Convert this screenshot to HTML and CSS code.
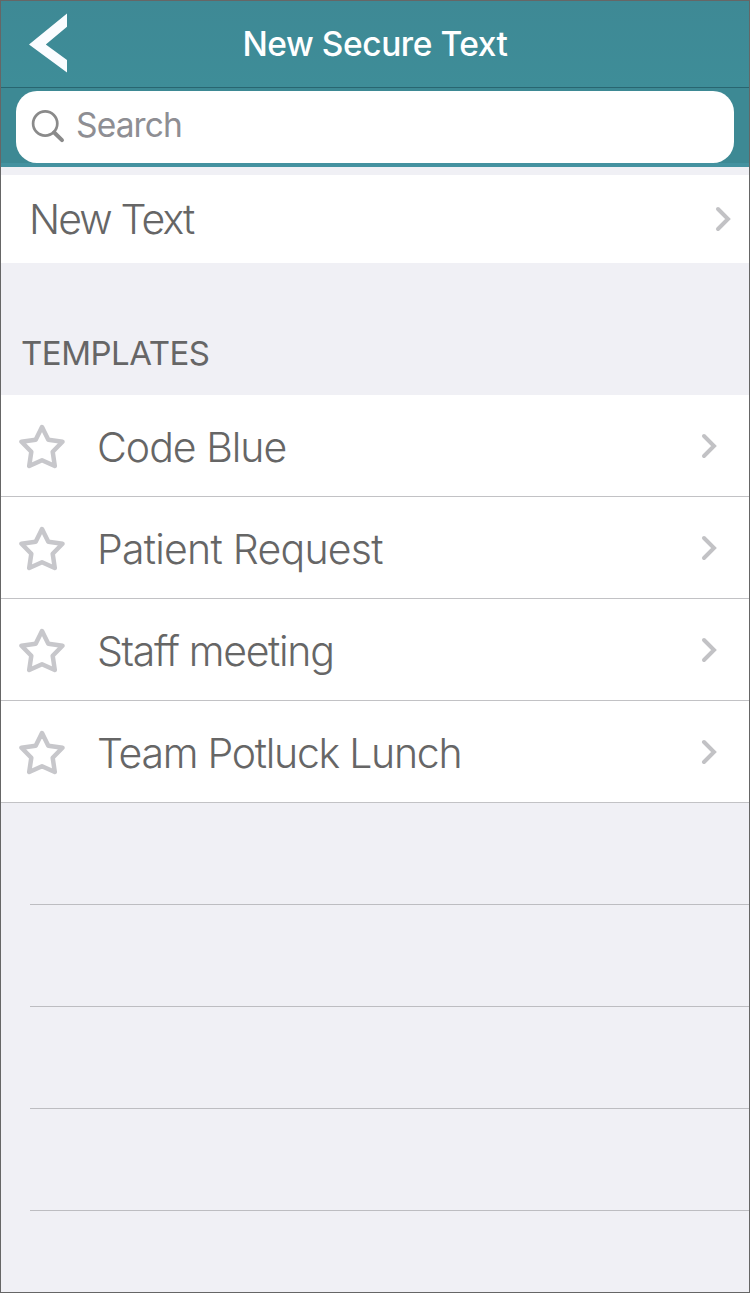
FILE: index.html
```html
<!DOCTYPE html>
<html lang="en">
<head>
    <meta charset="UTF-8">
    <meta name="viewport" content="width=device-width, initial-scale=1.0">
    <title>New Secure Text</title>
    <link rel="stylesheet" href="styles.css">
</head>
<body>
    <div class="screen">
        <!-- Top bar -->
        <header class="navbar">
            <svg class="back" viewBox="0 0 38 58"><path d="M38 -0.500V12.800L16.800 30.500L38 46V58.500L0 30.500Z" fill="#fafcff"/></svg>
            <h1>New Secure Text</h1>
        </header>

        <!-- Search -->
        <div class="search-bar">
            <div class="search-box">
                <svg class="search-icon" viewBox="0 0 34 34"><circle cx="14.200" cy="13.500" r="12.100" /><path class="handle" d="M23.200 22.500L31 30.200"/></svg>
                <span>Search</span>
            </div>
        </div>

        <div class="new-text">
            <span class="label new">New Text</span>
            <svg class="chevron" viewBox="0 0 16 26"><path d="M3 3L13 13L3 23"/></svg>
        </div>

        <!-- Templates -->
        <h2>TEMPLATES</h2>
        <ul class="templates">
            <li>
                <svg class="star" viewBox="0 0 46 46"><path d="M23 4L29.300 16.800L43.500 18.700L33.700 28.800L35.800 43L23 37.200L10.200 43L12.300 28.800L2.500 18.700L16.700 16.800Z"/></svg>
                <span class="label code">Code Blue</span>
                <svg class="chevron" viewBox="0 0 16 26"><path d="M3 3L13 13L3 23"/></svg>
            </li>
            <li>
                <svg class="star" viewBox="0 0 46 46"><path d="M23 4L29.300 16.800L43.500 18.700L33.700 28.800L35.800 43L23 37.200L10.200 43L12.300 28.800L2.500 18.700L16.700 16.800Z"/></svg>
                <span class="label patient">Patient Request</span>
                <svg class="chevron" viewBox="0 0 16 26"><path d="M3 3L13 13L3 23"/></svg>
            </li>
            <li>
                <svg class="star" viewBox="0 0 46 46"><path d="M23 4L29.300 16.800L43.500 18.700L33.700 28.800L35.800 43L23 37.200L10.200 43L12.300 28.800L2.500 18.700L16.700 16.800Z"/></svg>
                <span class="label staff">Staff meeting</span>
                <svg class="chevron" viewBox="0 0 16 26"><path d="M3 3L13 13L3 23"/></svg>
            </li>
            <li>
                <svg class="star" viewBox="0 0 46 46"><path d="M23 4L29.300 16.800L43.500 18.700L33.700 28.800L35.800 43L23 37.200L10.200 43L12.300 28.800L2.500 18.700L16.700 16.800Z"/></svg>
                <span class="label team">Team Potluck Lunch</span>
                <svg class="chevron" viewBox="0 0 16 26"><path d="M3 3L13 13L3 23"/></svg>
            </li>
        </ul>

        <!-- Empty rows -->
        <div class="empty-row"></div>
        <div class="empty-row"></div>
        <div class="empty-row"></div>
        <div class="empty-row"></div>
    </div>
</body>
</html>
```
FILE: styles.css
```css
* {
    box-sizing: border-box;
}
body {
    margin: 0;
    font-family: Inter, "Liberation Sans", sans-serif;
    color: #666;
}
.screen {
    width: 750px;
    height: 1293px;
    border: 1px solid #666;
    background-color: #f0f0f5;
    overflow: hidden;
}
.navbar {
    display: grid;
    grid-template-columns: 80px 1fr 80px;
    height: 87px;
    background: linear-gradient(#3e8995, #3e8d98);
    border-bottom: 1px solid #286570;
}
.back {
    width: 38px;
    height: 58px;
    margin: 13px 0 0 28px;
    overflow: visible;
}
h1 {
    margin: 0;
    color: white;
    font-size: 33.5px;
    font-weight: 500;
    letter-spacing: -0.45px;
    line-height: 86px;
    text-align: center;
    white-space: nowrap;
}
.search-bar {
    height: 79px;
    padding: 3px 15px 0;
    background-color: #3d8994;
    border-bottom: 4px solid #4492a0;
}
.search-box {
    display: flex;
    align-items: center;
    height: 72px;
    padding-left: 15px;
    border-radius: 21px;
    background-color: white;
    color: #8e8e93;
    font-size: 33.5px;
    letter-spacing: -0.85px;
}
.search-box span {
    margin: -4px 0 0 11px;
}
.search-icon {
    width: 34px;
    height: 34px;
    margin-top: -1px;
    fill: none;
    stroke: #8a8a8a;
    stroke-width: 2.7;
    stroke-linecap: round;
}
.handle {
    stroke-width: 4;
}
.new-text {
    display: flex;
    align-items: center;
    height: 88px;
    margin-top: 8px;
    padding: 0 18px 0 29px;
    background-color: white;
}
.label {
    flex: 1;
    padding-top: 2px;
    font-size: 41px;
    font-weight: 300;
    line-height: 50px;
    white-space: nowrap;
}
.new {
    margin-left: -1px;
    padding-top: 0;
    letter-spacing: -1.9px;
}
.code {
    letter-spacing: -1px;
}
.patient {
    letter-spacing: -0.75px;
}
.staff {
    letter-spacing: -1.3px;
}
.team {
    letter-spacing: -1.27px;
}
.chevron {
    width: 16px;
    height: 26px;
    fill: none;
    stroke: #c2c2c5;
    stroke-width: 4;
    stroke-linecap: round;
}
h2 {
    height: 132px;
    margin: 0;
    padding: 70px 0 0 20px;
    font-size: 33px;
    font-weight: 400;
    letter-spacing: -0.5px;
    line-height: 40px;
}
.templates {
    list-style: none;
    margin: 0;
    padding: 0;
}
.templates li {
    display: flex;
    align-items: center;
    height: 102px;
    padding: 0 32px 0 18px;
    border-bottom: 1px solid #c2c2c5;
    background-color: white;
}
.star {
    width: 46px;
    height: 46px;
    margin-right: 32px;
    fill: none;
    stroke: #c7c7cb;
    stroke-width: 4.5;
    stroke-linejoin: round;
}
.empty-row {
    height: 102px;
    margin-left: 29px;
    border-bottom: 1px solid #bdbdc1;
}
```
